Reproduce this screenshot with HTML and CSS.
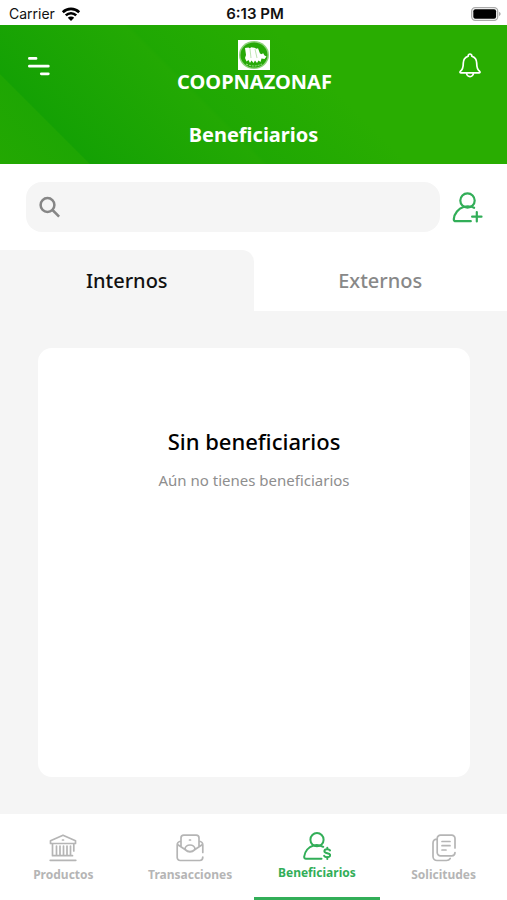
FILE: index.html
```html
<!DOCTYPE html>
<html lang="es">
<head>
<meta charset="utf-8">
<meta name="viewport" content="width=device-width, initial-scale=1">
<title>Beneficiarios</title>
<link rel="stylesheet" href="styles.css">
</head>
<body>
<div class="app">
  <div class="status">
    <span class="carrier">Carrier
      <svg width="20" height="14" viewBox="0 0 20 14" fill="none" stroke="#000" stroke-width="2.6"><path d="M1.8 5.2a11.7 11.7 0 0 1 16.4 0M4.8 8.4a7.4 7.4 0 0 1 10.4 0"/><path d="M10 14 6.8 10.8a4.6 4.6 0 0 1 6.4 0z" fill="#000" stroke="none"/></svg>
    </span>
    <span class="time">6:13 PM</span>
    <svg class="battery" width="30" height="14" viewBox="0 0 30 14"><rect x=".7" y=".7" width="26" height="12.6" rx="3.5" fill="#fff" stroke="#aaa" stroke-width="1.3"/><rect x="2.3" y="2.3" width="22.8" height="9.4" rx="2" fill="#000"/><path d="M28 4.8q3.400 2.200 0 4.400z" fill="#aaa"/></svg>
  </div>

  <header class="header">
    <div class="brandbar">
      <button class="icon-btn" type="button" aria-label="Menú">
        <svg width="24" height="20" viewBox="0 0 24 20" stroke="#fff" stroke-width="2.8" stroke-linecap="round"><path d="M3.400 2.400H10M3.400 10.200H22.300M15.300 17.800H22.300"/></svg>
      </button>
      <div class="brand">
        <svg width="32" height="30" viewBox="0 0 32 30"><rect width="32" height="30" fill="#fff"/><ellipse cx="16" cy="15" rx="15" ry="14" fill="#8fd27c"/><ellipse cx="16" cy="15" rx="13.500" ry="12.600" fill="#27a908"/><path d="M7 8l3.500-.5 1.500 1 1-1.300 3.500.5 2 1 1.500-.5 2 5.300 2 .8 1-1.300 1.500 2.500 2 1-2 2.500-3-.5-1 3.500-2-1.500-1.500 2.500-2-2.500-1.500 2.500-2-2.500-1.500 2.500-1.500-3-2 1.500-1.500-3.500 1-3z" fill="#fff"/><path d="M12 9l1 9M17 9l2 9" stroke="#8fd27c" stroke-width=".6"/><path d="M8 24q8 4 16 0" fill="none" stroke="#a5dc95" stroke-dasharray="2 1"/></svg>
        <span class="brand-name">COOPNAZONAF</span>
      </div>
      <button class="icon-btn" type="button" aria-label="Notificaciones">
        <svg width="22" height="25" viewBox="0 0 22 25" fill="none" stroke="#fff" stroke-width="1.700" stroke-linejoin="round"><path d="M9.200 3.200V2.800a1.800 1.800 0 0 1 3.600 0v.4c3.200 1 4.900 3.500 4.900 6.800 0 4.500.5 6.500 2.900 8.300.8.700.4 1.500-.6 1.500H2c-1 0-1.400-.8-.6-1.500 2.400-1.800 2.900-3.800 2.900-8.300 0-3.300 1.700-5.800 4.900-6.800zM7.500 19.800a3.500 3.800 0 0 0 7 0"/></svg>
      </button>
    </div>
    <h1>Beneficiarios</h1>
  </header>

  <div class="search-row">
    <label class="search">
      <svg width="22" height="22" viewBox="0 0 22 22" fill="none" stroke="#868686" stroke-width="2.500"><circle cx="8.500" cy="9" r="6.900"/><path d="M13.500 14l6.600 6.600"/></svg>
      <input type="search" aria-label="Buscar beneficiario">
    </label>
    <button class="icon-btn" type="button" aria-label="Agregar beneficiario">
      <svg width="31" height="32" viewBox="0 0 31 32" fill="none" stroke="#32ae58" stroke-width="2.200" stroke-linecap="round"><circle cx="15.500" cy="9.500" r="7.200"/><path d="M11.500 16C6.500 17.500 2.300 22.500 1.800 28c-.1 1.400.7 2.200 2 2.200h15M11.500 16q5.500-1.800 10.600.8M24.800 21v9.400M20.100 25.700h9.400"/></svg>
    </button>
  </div>

  <div class="tabs" role="tablist">
    <button class="tab tab-active" type="button" role="tab" aria-selected="true">Internos</button>
    <button class="tab" type="button" role="tab" aria-selected="false">Externos</button>
  </div>

  <main class="content">
    <section class="card">
      <h2>Sin beneficiarios</h2>
      <p>Aún no tienes beneficiarios</p>
    </section>
  </main>

  <nav class="nav">
    <a class="nav-item" href="#productos">
      <svg width="28" height="28" viewBox="0 0 28 28" fill="none" stroke="#b5b5b5" stroke-width="1.700" stroke-linecap="round" stroke-linejoin="round"><path d="M1.500 9.500V6.800L14 1.200l12.500 5.600v2.700zM3.500 9.500v12.200h20M7.500 12v9M11 12v9M14.500 12v9M18 12v9M21.500 12v9M24.800 10v7M1.200 26.300h25.600M13.500 6h1"/></svg>
      <span>Productos</span>
    </a>
    <a class="nav-item" href="#transacciones">
      <svg width="28" height="28" viewBox="0 0 28 28" fill="none" stroke="#b5b5b5" stroke-width="1.700" stroke-linecap="round" stroke-linejoin="round"><path d="M5 12.500V4a2.800 2.800 0 0 1 2.800-2.800h12.400A2.800 2.800 0 0 1 23 4v8.500M5 7C2.500 7.500 1.200 8.500 1.200 11v12.500a3 3 0 0 0 3 3h19.600c2 0 3-1.200 3-3.500M1.500 10.500l7.500 5q5 4.500 10 0l7.500-5M23 7c2.500.5 3.800 1.500 3.800 4v7.500M9 15.500c0-6 10-6 10 0M13.500 6h1"/></svg>
      <span>Transacciones</span>
    </a>
    <a class="nav-item nav-active" href="#beneficiarios" aria-current="page">
      <svg width="28" height="28" viewBox="0 0 28 28" fill="none" stroke="#32ae58" stroke-width="2" stroke-linecap="round"><circle cx="14" cy="7.700" r="6.600"/><path d="M10.500 13.500C5.500 15 1.800 19.500 1.200 24.500c-.1 1.500.5 2.300 1.800 2.300h15.500M10.500 13.500q4.500-1.500 9.700 1.300M27 18.400c-1-1.600-5.600-1.600-5.600.8 0 2.700 5.800 1.300 5.800 4 0 2.500-4.900 2.500-6 .7M24.300 15.700v1.500M24.300 25v2"/></svg>
      <span>Beneficiarios</span>
    </a>
    <a class="nav-item" href="#solicitudes">
      <svg width="28" height="28" viewBox="0 0 28 28" fill="none" stroke="#b5b5b5" stroke-width="1.700" stroke-linecap="round" stroke-linejoin="round"><path d="M25 14V4.500a3.300 3.300 0 0 0-3.300-3.300H10.500a3.300 3.300 0 0 0-3.300 3.300v14a3.300 3.300 0 0 0 3.300 3.300h11.200c2 0 3.300-1.300 3.300-3.300M7.200 5.200C4.500 5.200 3 6.500 3 9v13.500a4 4 0 0 0 4 4h9.500q2.500 0 3.700-2M12 7.500h8M12 11.700h8M12 16h4"/></svg>
      <span>Solicitudes</span>
    </a>
  </nav>
</div>
</body>
</html>
```
FILE: styles.css
```css
* { box-sizing: border-box; }

body {
  margin: 0;
  font-family: "Noto Sans", "Open Sans", sans-serif;
  background: #fff;
  color: #111;
}

button {
  font: inherit;
  border: 0;
  padding: 0;
  background: none;
}

svg { display: block; flex: none; }

h1, h2, p { margin: 0; }

.app {
  min-height: 100vh;
  display: flex;
  flex-direction: column;
}

.status {
  display: grid;
  grid-template-columns: 1fr auto 1fr;
  align-items: center;
  height: 25px;
  padding: 2px 6px 0 9px;
  font: 14px/20px Inter, Roboto, sans-serif;
}

.carrier { display: flex; align-items: center; gap: 6px; }
.time { font-size: 15px; font-weight: 600; }
.battery { justify-self: end; }

.header {
  color: #fff;
  text-align: center;
  padding: 15px 26px 16px;
  background:
    linear-gradient(45deg, #23a802 0, #1ea603 63px, transparent 64px),
    linear-gradient(45deg, #14a104 64px, #23a903 186px, transparent 190px),
    linear-gradient(45deg, #1fa803 188px, #29ad01 290px);
}

.brandbar {
  display: flex;
  justify-content: space-between;
  align-items: flex-start;
}

.brand {
  display: flex;
  flex-direction: column;
  align-items: center;
}

.brand-name {
  font-size: 20px;
  line-height: 24px;
  font-weight: 700;
}

.icon-btn {
  display: grid;
  place-items: center;
}

.brandbar .icon-btn {
  height: 51px;
}

h1 {
  margin-top: 28px;
  font-size: 20px;
  line-height: 26px;
  font-weight: 700;
}

.search-row {
  display: flex;
  align-items: center;
  gap: 12px;
  padding: 18px 24px 18px 26px;
}

.search {
  flex: 1;
  display: flex;
  align-items: center;
  gap: 12px;
  height: 50px;
  padding: 0 13px;
  border-radius: 16px;
  background: #f5f5f5;
}

.search input {
  flex: 1;
  min-width: 0;
  border: 0;
  outline: 0;
  background: none;
  font: inherit;
}

.tabs {
  display: grid;
  grid-template-columns: 1fr 1fr;
}

.tab {
  height: 61px;
  font-size: 20px;
  line-height: 28px;
  font-weight: 500;
  color: #888;
}

.tab-active {
  color: #111;
  background: #f5f5f5;
  border-top-right-radius: 12px;
}

.content {
  flex: 1;
  display: flex;
  padding: 37px 37px 37px 38px;
  background: #f5f5f5;
}

.card {
  flex: 1;
  padding-top: 77px;
  border-radius: 14px;
  background: #fff;
  text-align: center;
}

.card h2 {
  font-size: 22px;
  line-height: 32px;
  font-weight: 500;
  color: #000;
}

.card p {
  margin-top: 13px;
  font-size: 15px;
  line-height: 20px;
  color: #8e8e8e;
}

.nav {
  display: grid;
  grid-template-columns: repeat(4, 1fr);
}

.nav-item {
  display: flex;
  flex-direction: column;
  align-items: center;
  gap: 4px;
  height: 86px;
  padding-top: 20px;
  font-size: 12px;
  line-height: 17px;
  font-weight: 700;
  color: #b5b5b5;
  text-decoration: none;
}

.nav-active {
  padding-top: 18px;
  color: #32ae58;
  border-bottom: 3px solid #32ae58;
}
```
